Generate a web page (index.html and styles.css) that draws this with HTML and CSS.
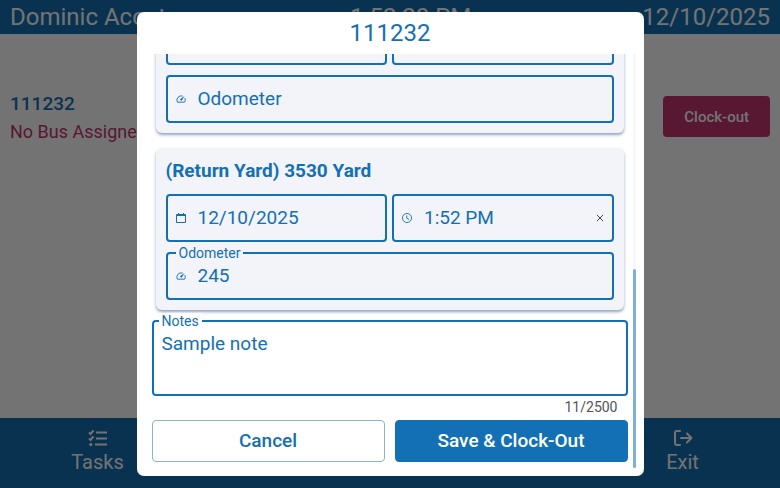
FILE: index.html
```html
<!DOCTYPE html>
<html lang="en">
<head>
  <meta charset="UTF-8">
  <meta name="viewport" content="width=device-width, initial-scale=1.0">
  <title>Clock-out</title>
  <link rel="stylesheet" href="styles.css">
</head>
<body>

<header class="topbar">
  <span>Dominic Acosta</span>
  <span>1:52:20 PM</span>
  <span>12/10/2025</span>
</header>

<main class="page">
  <div>
    <div class="route-number">111232</div>
    <div class="route-bus">No Bus Assigned</div>
  </div>
  <button type="button" class="clock-out">Clock-out</button>
</main>

<nav class="bottom-nav">
  <a href="#tasks" class="nav-item">
    <svg class="nav-icon" viewBox="0 0 20 18" fill="none" stroke="currentColor" stroke-width="2">
      <path d="M1 3.5l1.5 1.5L5.5 1.5M1 9.5l1.5 1.5 3-3.5M8 3.5h11M8 9.5h11M7 15.5h12"/>
      <circle cx="2.8" cy="15.5" r="1.6" fill="currentColor" stroke="none"/>
    </svg>
    Tasks
  </a>
  <a href="#exit" class="nav-item">
    <svg class="nav-icon" viewBox="0 0 20 18" fill="none" stroke="currentColor" stroke-width="2" stroke-linecap="round" stroke-linejoin="round">
      <path d="M7 2H4a2 2 0 0 0-2 2v10a2 2 0 0 0 2 2h3M8 9h10.500M14 4.500L18.500 9 14 13.500"/>
    </svg>
    Exit
  </a>
</nav>

<div class="overlay">
  <div class="modal" role="dialog" aria-labelledby="modalTitle">
    <h1 class="modal-title" id="modalTitle">111232</h1>
    <div class="modal-body">
      <form class="modal-form">
        <section class="card">
          <div class="field-row">
            <div class="field"><input type="text" aria-label="Date"></div>
            <div class="field"><input type="text" aria-label="Time"></div>
          </div>
          <div class="field">
            <svg class="field-icon" viewBox="1 1 22 22"><use href="#gauge" width="24" height="24"/></svg>
            <input type="text" aria-label="Odometer" placeholder="Odometer">
          </div>
        </section>

        <section class="card">
          <h2 class="card-title">(Return Yard) 3530 Yard</h2>
          <div class="field-row">
            <div class="field">
              <svg class="field-icon" viewBox="2 2 20 20"><path fill="currentColor" d="M20 4h-2V2h-2v2H8V2H6v2H4a2 2 0 0 0-2 2v14a2 2 0 0 0 2 2h16a2 2 0 0 0 2-2V6a2 2 0 0 0-2-2zm0 16H4V8h16z"/></svg>
              <input type="text" aria-label="Date" value="12/10/2025">
            </div>
            <div class="field">
              <svg class="field-icon" viewBox="1 1 22 22" fill="none" stroke="currentColor" stroke-width="2"><circle cx="12" cy="12" r="10"/><path d="M11.500 6.500v6l5 3"/></svg>
              <input type="text" aria-label="Time" value="1:52 PM">
              <button type="button" class="clear" aria-label="Clear">
                <svg viewBox="0 0 8 8" stroke="currentColor"><path d="M1 1l6 6M7 1L1 7"/></svg>
              </button>
            </div>
          </div>
          <div class="field">
            <label class="float-label" for="odometer">Odometer</label>
            <svg class="field-icon" viewBox="1 1 22 22"><use href="#gauge" width="24" height="24"/></svg>
            <input type="text" id="odometer" value="245">
          </div>
        </section>

        <div class="field notes">
          <label class="float-label" for="notes">Notes</label>
          <textarea id="notes">Sample note</textarea>
        </div>
        <div class="counter">11/2500</div>

        <div class="actions">
          <button type="button" class="btn">Cancel</button>
          <button type="submit" class="btn btn-primary">Save &amp; Clock-Out</button>
        </div>
      </form>
      <div class="scroll-track"><div class="scroll-thumb"></div></div>
    </div>
  </div>
</div>

<svg class="symbols">
  <symbol id="gauge" viewBox="0 0 24 24">
    <path fill="none" stroke="currentColor" stroke-width="2" d="M15.500 5.600A9.500 9.500 0 0 0 4 19h16a9.500 9.500 0 0 0 .6-9"/>
    <path fill="currentColor" d="M20 5.500l-8.700 5.800a2.200 2.200 0 1 0 3 3z"/>
  </symbol>
</svg>

</body>
</html>
```

FILE: styles.css
```css
* {
  box-sizing: border-box;
}

body {
  margin: 0;
  min-height: 100vh;
  display: flex;
  flex-direction: column;
  font-family: Roboto, "Liberation Sans", sans-serif;
  background: #fff;
  color: #1470b4;
}

input, textarea, button {
  font-family: inherit;
  color: inherit;
}

.topbar {
  display: flex;
  justify-content: space-between;
  padding: 0 10px;
  background: #1470b4;
  color: #fff;
  font-size: 24px;
  line-height: 34px;
}

.page {
  flex: 1;
  display: flex;
  justify-content: space-between;
  align-items: flex-start;
  padding: 56px 10px 0;
}

.route-number {
  font-size: 19px;
  font-weight: 500;
  line-height: 28px;
}

.route-bus {
  color: #c4356f;
  font-size: 18px;
  line-height: 28px;
}

.clock-out {
  margin-top: 6px;
  height: 41px;
  padding: 0 21px;
  border: none;
  border-radius: 4px;
  background: #c4356f;
  color: #fff;
  font-size: 15px;
  font-weight: 500;
}

.bottom-nav {
  display: flex;
  justify-content: space-between;
  height: 70px;
  background: #1470b4;
}

.nav-item {
  width: 25%;
  padding-top: 11px;
  display: flex;
  flex-direction: column;
  align-items: center;
  color: #fff;
  font-size: 20px;
  line-height: 30px;
  text-decoration: none;
}

.nav-icon {
  width: 20px;
  height: 18px;
}

.overlay {
  position: fixed;
  inset: 0;
  display: flex;
  justify-content: center;
  align-items: center;
  background: rgba(0, 0, 0, 0.55);
}

.modal {
  width: 65%;
  height: 95%;
  display: flex;
  flex-direction: column;
  padding-bottom: 8px;
  border-radius: 7px;
  background: #fff;
}

.modal-title {
  margin: 0;
  font-size: 24px;
  font-weight: 400;
  line-height: 42px;
  text-align: center;
}

.modal-body {
  flex: 1;
  min-height: 0;
  display: flex;
  gap: 5px;
  padding: 0 8px 0 15px;
}

/* content sits at the end of the scroll area */
.modal-form {
  flex: 1;
  min-width: 0;
  display: flex;
  flex-direction: column;
  justify-content: flex-end;
  padding-bottom: 6px;
  overflow: hidden;
}

.scroll-track {
  width: 3px;
  display: flex;
  align-items: flex-end;
  background: #f6f6fb;
}

.scroll-thumb {
  width: 100%;
  height: 48%;
  border-radius: 2px;
  background: #7fb0d4;
}

.card {
  flex-shrink: 0;
  display: flex;
  flex-direction: column;
  gap: 10px;
  margin: 0 4px 15px;
  padding: 10px;
  border-radius: 6px;
  background: #f3f3fa;
  box-shadow: 0 2px 3px rgba(40, 80, 130, 0.5);
}

.card + .card {
  margin-bottom: 10px;
}

.card-title {
  margin: 0;
  font-size: 19px;
  font-weight: 700;
  line-height: 26px;
}

.field-row {
  display: grid;
  grid-template-columns: repeat(2, minmax(0, 1fr));
  gap: 5px;
}

.field {
  position: relative;
  display: flex;
  align-items: center;
  gap: 12px;
  height: 48px;
  padding: 0 8px;
  border: 2px solid #1470b4;
  border-radius: 4px;
  background: #f3f3fa;
}

.field input {
  flex: 1;
  min-width: 0;
  padding: 0;
  border: none;
  outline: none;
  background: none;
  font-size: 19px;
}

.field input::placeholder {
  color: inherit;
  opacity: 1;
}

.field-icon {
  flex: none;
  width: 10px;
  height: 10px;
}

.float-label {
  position: absolute;
  top: -9px;
  left: 8px;
  padding: 0 3px;
  background: inherit;
  font-size: 14px;
  line-height: 16px;
}

.clear {
  display: flex;
  padding: 0;
  border: none;
  background: none;
  color: #444;
}

.clear svg {
  width: 8px;
  height: 8px;
}

.notes {
  flex-shrink: 0;
  height: 76px;
  background: #fff;
}

.notes .float-label {
  left: 5px;
}

.notes textarea {
  flex: 1;
  height: 100%;
  padding: 10px 0 0;
  border: none;
  outline: none;
  resize: none;
  background: none;
  font-size: 19px;
}

.counter {
  margin-bottom: 2px;
  padding-right: 10px;
  color: #555;
  font-size: 14px;
  line-height: 22px;
  text-align: right;
}

.actions {
  display: grid;
  grid-template-columns: 1fr 1fr;
  gap: 10px;
}

.btn {
  height: 42px;
  border: 1px solid #8fb2cc;
  border-radius: 4px;
  background: #fff;
  font-size: 19px;
  font-weight: 500;
}

.btn-primary {
  border-color: #1470b4;
  background: #1470b4;
  color: #fff;
}

.symbols {
  display: none;
}
```
